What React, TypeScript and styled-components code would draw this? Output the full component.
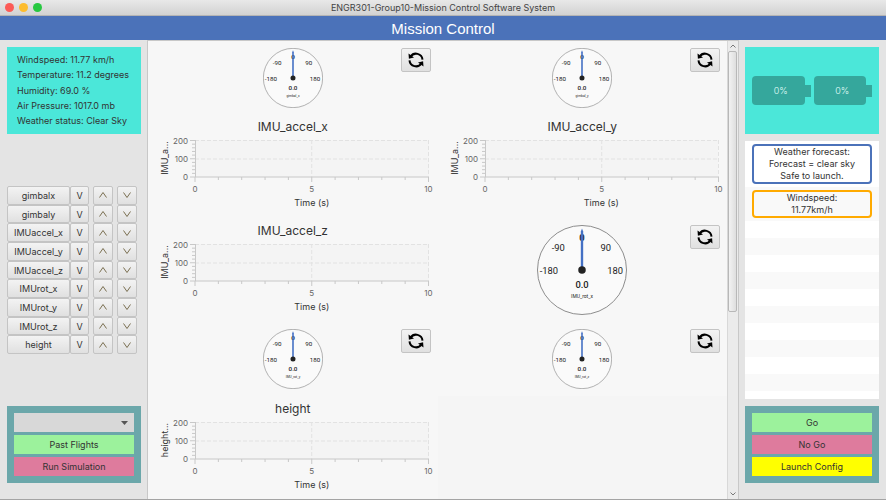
import React from "react";
import styled, { createGlobalStyle } from "styled-components";

const GlobalStyle = createGlobalStyle`
  * { box-sizing: border-box; }
  html, body, #root { height: 100%; }
  body {
    margin: 0;
    background: #e4e4e4;
    color: #333333;
    font-family: Inter, "Liberation Sans", sans-serif;
    font-size: 9px;
  }
  button, select { font: inherit; color: inherit; margin: 0; }
`;

const Window = styled.div`
  display: flex;
  flex-direction: column;
  min-height: 100vh;
  border-bottom: 1px solid #a4a4a4;
`;

const TitleBar = styled.header`
  display: grid;
  grid-template-columns: 1fr auto 1fr;
  align-items: center;
  height: 16px;
  background: linear-gradient(#e8e8e8, #d2d2d2);
  border-bottom: 1px solid #b4b4b4;
`;

const Lights = styled.div`
  display: flex;
  gap: 5px;
  padding-left: 5px;
`;

const Light = styled.button<{ $color: string }>`
  width: 9px;
  height: 9px;
  padding: 0;
  border: 0;
  border-radius: 50%;
  background: ${(p) => p.$color};
`;

const WindowTitle = styled.span`
  line-height: 15px;
  color: #444444;
`;

const Banner = styled.h1`
  margin: 0;
  height: 24px;
  background: #4b72b9;
  color: #ffffff;
  text-align: center;
  font: 400 15px/25px "Liberation Sans", sans-serif;
`;

const Body = styled.div`
  flex: 1;
  display: grid;
  grid-template-columns: 147px minmax(0, 1fr) 147px;
`;

const Side = styled.aside<{ $right?: boolean }>`
  display: flex;
  flex-direction: column;
  padding: ${(p) => (p.$right ? "7px 7px 16px 6px" : "7px 6px 16px 7px")};
`;

const Weather = styled.section`
  display: flex;
  flex-direction: column;
  justify-content: space-between;
  height: 87px;
  padding: 5px 9px 6px 10px;
  background: #4be7d9;
  line-height: 15px;
  white-space: nowrap;
`;

const WeatherLine = styled.p`
  margin: 0;
`;

const Channels = styled.ul`
  display: flex;
  flex-direction: column;
  height: 168px;
  margin: 52px 0 auto;
  padding: 0;
  list-style: none;
`;

const Channel = styled.li`
  flex: 1;
  display: grid;
  grid-template-columns: 63px 19px 24px 24px;
  min-height: 0;
`;

const Key = styled.button<{ $gap?: boolean }>`
  display: flex;
  align-items: center;
  justify-content: center;
  padding: 0;
  margin-left: ${(p) => (p.$gap ? "4px" : "0")};
  border: 1px solid #c4c4c4;
  border-radius: 2px;
  background: linear-gradient(#f3f3f3, #e0e0e0);
`;

const Panel = styled.section`
  display: flex;
  flex-direction: column;
  gap: 3px;
  padding: 7px;
  background: #6ba7aa;
`;

const Action = styled.button<{ $color: string }>`
  height: 19px;
  padding: 0;
  border: 0;
  background: ${(p) => p.$color};
`;

const SelectBox = styled.div`
  display: grid;
  align-items: center;
  background: #d8d8d8;
  > * { grid-area: 1 / 1; }
  > svg { justify-self: end; margin-right: 6px; pointer-events: none; }
`;

const FlightSelect = styled.select`
  appearance: none;
  width: 100%;
  height: 19px;
  padding: 0 6px;
  border: 0;
  background: transparent;
`;

const Center = styled.main`
  display: grid;
  grid-template-columns: minmax(0, 1fr) 11px;
  background: #f7f7f7;
  border: 1px solid #c8c8c8;
  border-bottom: 0;
`;

const Board = styled.div`
  display: grid;
  grid-template-columns: 1fr 1fr;
  grid-template-rows: 73px 104px 104px 74px 1fr;
`;

const GaugeCell = styled.section`
  display: grid;
  grid-template-columns: 1fr auto 1fr;
  align-items: start;
  padding: 7px 7px 0;
  > svg { grid-column: 2; }
`;

const RefreshButton = styled.button`
  display: flex;
  align-items: center;
  justify-content: center;
  justify-self: end;
  width: 30px;
  height: 24px;
  padding: 0;
  border: 1px solid #c4c4c4;
  border-radius: 2px;
  background: linear-gradient(#f3f3f3, #e0e0e0);
`;

const ChartCell = styled.section`
  display: grid;
  grid-template-columns: 47px minmax(0, 1fr) 9px;
  grid-template-rows: 26px 37px 18px 16px;
`;

const ChartTitle = styled.h2`
  grid-column: 1 / -1;
  margin: 0;
  text-align: center;
  font-size: 12px;
  font-weight: 400;
  line-height: 25px;
`;

const PlotArea = styled.svg`
  grid-column: 2;
  grid-row: 2;
  width: 100%;
  height: 37px;
  overflow: visible;
  background: #f4f4f4;
  font-size: 8px;
  fill: #666666;
`;

const AxisName = styled.div`
  grid-column: 2;
  grid-row: 4;
  text-align: center;
  line-height: 16px;
`;

const Blank = styled.div`
  background: #f5f5f5;
`;

const ScrollTrack = styled.div`
  display: flex;
  flex-direction: column;
  background: #ebebeb;
  border-left: 1px solid #d8d8d8;
  padding-right: 1px;
`;

const ScrollArrow = styled.button`
  display: flex;
  align-items: center;
  justify-content: center;
  height: 10px;
  padding: 0;
  border: 0;
  background: transparent;
`;

const ScrollThumb = styled.div`
  flex: 260;
  border: 1px solid #b8b8b8;
  border-radius: 2px;
  background: linear-gradient(90deg, #f2f2f2, #dedede);
`;

const ScrollRest = styled.div`
  flex: 178;
`;

const Batteries = styled.section`
  display: flex;
  align-items: center;
  gap: 3px;
  height: 87px;
  padding: 0 7px;
  background: #4be7d9;
`;

const Battery = styled.div`
  flex: 1;
  display: flex;
  align-items: center;
`;

const Cell = styled.div`
  flex: 1;
  padding-left: 5px;
  border-radius: 4px;
  background: #35a79c;
  color: #e4fffb;
  text-align: center;
  font-weight: 300;
  line-height: 29px;
`;

const Tip = styled.div`
  width: 6px;
  height: 12px;
  background: #35a79c;
`;

const Notices = styled.ul`
  flex: 1;
  display: flex;
  flex-direction: column;
  margin: 7px 0;
  padding: 0;
  list-style: none;
  background: #ffffff;
`;

const Notice = styled.li<{ $odd?: boolean }>`
  padding: 3px 7px;
  background: ${(p) => (p.$odd ? "#f9f9f9" : "#ffffff")};
`;

const NoticeText = styled.p<{ $color: string }>`
  margin: 0;
  border: 2px solid ${(p) => p.$color};
  border-radius: 4px;
  text-align: center;
  line-height: 12px;
`;

const Stripes = styled.li`
  flex: 1;
  background: repeating-linear-gradient(#ffffff 0 17px, #f9f9f9 17px 34px);
`;

const Chevron = ({ down }: { down?: boolean }) => (
  <svg width="8" height="6" viewBox="0 0 8 6" fill="none" stroke="#7a6f50">
    <path d={down ? "M.5 .5 4 5.5 7.5 .5" : "M.5 5.5 4 .5 7.5 5.5"} />
  </svg>
);

const ScrollChevron = ({ down }: { down?: boolean }) => (
  <svg width="6" height="4" viewBox="0 0 6 4" fill="none" stroke="#777777">
    <path d={down ? "M.5 .5 3 3 5.5 .5" : "M.5 3.5 3 1 5.5 3.5"} />
  </svg>
);

const Refresh = ({ label }: { label: string }) => (
  <RefreshButton aria-label={`Reset ${label}`}>
    <svg width="16" height="16" viewBox="0 0 16 16">
      <g fill="none" stroke="#000000" strokeWidth="2">
        <path d="M2.6 4.6A6.5 6.5 0 0 1 14.5 7.6" />
        <path d="M13.4 11.4A6.5 6.5 0 0 1 1.5 8.4" />
      </g>
      <path d="M.5 1.6 .9 6.8 6 5.6ZM15.5 14.4 15.1 9.2 10 10.4Z" />
    </svg>
  </RefreshButton>
);

const Gauge = ({ label, size }: { label: string; size: number }) => (
  <GaugeCell>
    <svg
      width={size}
      height={size}
      viewBox="-45.5 -45.5 91 91"
      fontFamily="Roboto, sans-serif"
      fontSize="9.5"
      textAnchor="middle"
      fill="#222222"
    >
      <circle r="45" fill="#fafafa" stroke="#8c8c8c" strokeWidth="1" />
      <text y="-29" fontWeight="700">0</text>
      <text x="-24" y="-19">-90</text>
      <text x="24" y="-19">90</text>
      <text x="-33.5" y="4">-180</text>
      <text x="33.5" y="4">180</text>
      <text y="18" fontWeight="500">0.0</text>
      <text y="28.5" fontSize="5">{label}</text>
      <path d="M-1.2 0V-39L0-42 1.2-39V0Z" fill="#4470c4" />
      <circle r="3.8" />
    </svg>
    <Refresh label={label} />
  </GaugeCell>
);

const tenths = [0, 1, 2, 3, 4, 5, 6, 7, 8, 9, 10];

const Chart = ({ title, axis }: { title: string; axis: string }) => (
  <ChartCell>
    <ChartTitle>{title}</ChartTitle>
    <PlotArea>
      <g stroke="#e2e2e2" strokeDasharray="4 2">
        <line x1="0" x2="100%" y1="0.5" y2="0.5" />
        <line x1="0" x2="100%" y1="19" y2="19" />
        <line x1="50%" x2="50%" y1="0" y2="37" />
        <line x1="100%" x2="100%" y1="0" y2="37" />
      </g>
      <g stroke="#c8c8c8">
        <line x1="0.5" x2="0.5" y1="0" y2="37" />
        <line x1="0" x2="100%" y1="37" y2="37" />
        {tenths.map((t) => (
          <line key={t} x1={`${t * 10}%`} x2={`${t * 10}%`} y1="37" y2={t % 5 ? 40 : 42} />
        ))}
        {tenths.map((t) => (
          <line key={t} x1={t % 5 ? -3 : -5} x2="0" y1={0.5 + t * 3.65} y2={0.5 + t * 3.65} />
        ))}
      </g>
      <g textAnchor="end">
        <text x="-7" y="4">200</text>
        <text x="-7" y="22">100</text>
        <text x="-7" y="40">0</text>
      </g>
      <g textAnchor="middle">
        <text x="0" y="52">0</text>
        <text x="50%" y="52">5</text>
        <text x="100%" y="52">10</text>
      </g>
      <text transform="translate(-27 18) rotate(-90)" textAnchor="middle" fontSize="9" fill="#333333">
        {axis}
      </text>
    </PlotArea>
    <AxisName>Time (s)</AxisName>
  </ChartCell>
);

const channels = [
  "gimbalx", "gimbaly", "IMUaccel_x", "IMUaccel_y", "IMUaccel_z",
  "IMUrot_x", "IMUrot_y", "IMUrot_z", "height",
];

const weather = [
  "Windspeed: 11.77 km/h",
  "Temperature: 11.2 degrees",
  "Humidity: 69.0 %",
  "Air Pressure: 1017.0 mb",
  "Weather status: Clear Sky",
];

export default function App() {
  return (
    <>
      <GlobalStyle />
      <Window>
        <TitleBar>
          <Lights>
            <Light $color="#fc5b57" aria-label="Close" />
            <Light $color="#fdbc2e" aria-label="Minimize" />
            <Light $color="#27c840" aria-label="Zoom" />
          </Lights>
          <WindowTitle>ENGR301-Group10-Mission Control Software System</WindowTitle>
        </TitleBar>
        <Banner>Mission Control</Banner>
        <Body>
          <Side>
            <Weather>
              {weather.map((line) => (
                <WeatherLine key={line}>{line}</WeatherLine>
              ))}
            </Weather>
            <Channels>
              {channels.map((name) => (
                <Channel key={name}>
                  <Key>{name}</Key>
                  <Key>V</Key>
                  <Key $gap aria-label={`Move ${name} up`}><Chevron /></Key>
                  <Key $gap aria-label={`Move ${name} down`}><Chevron down /></Key>
                </Channel>
              ))}
            </Channels>
            <Panel>
              <SelectBox>
                <FlightSelect aria-label="Flight" />
                <svg width="7" height="4" viewBox="0 0 7 4"><path d="M0 0H7L3.5 4Z" fill="#555555" /></svg>
              </SelectBox>
              <Action $color="#9cf29c">Past Flights</Action>
              <Action $color="#de7b9d">Run Simulation</Action>
            </Panel>
          </Side>
          <Center>
            <Board>
              <Gauge label="gimbal_x" size={60} />
              <Gauge label="gimbal_y" size={60} />
              <Chart title="IMU_accel_x" axis="IMU_a..." />
              <Chart title="IMU_accel_y" axis="IMU_a..." />
              <Chart title="IMU_accel_z" axis="IMU_a..." />
              <Gauge label="IMU_rot_x" size={90} />
              <Gauge label="IMU_rot_y" size={60} />
              <Gauge label="IMU_rot_z" size={60} />
              <Chart title="height" axis="height..." />
              <Blank />
            </Board>
            <ScrollTrack>
              <ScrollArrow aria-label="Scroll up"><ScrollChevron /></ScrollArrow>
              <ScrollThumb />
              <ScrollRest />
              <ScrollArrow aria-label="Scroll down"><ScrollChevron down /></ScrollArrow>
            </ScrollTrack>
          </Center>
          <Side $right>
            <Batteries>
              <Battery><Cell>0%</Cell><Tip /></Battery>
              <Battery><Cell>0%</Cell><Tip /></Battery>
            </Batteries>
            <Notices>
              <Notice>
                <NoticeText $color="#4b72b9">
                  Weather forecast:<br />Forecast = clear sky<br />Safe to launch.
                </NoticeText>
              </Notice>
              <Notice $odd>
                <NoticeText $color="#ffaa00">Windspeed:<br />11.77km/h</NoticeText>
              </Notice>
              <Stripes />
            </Notices>
            <Panel>
              <Action $color="#9cf29c">Go</Action>
              <Action $color="#de7b9d">No Go</Action>
              <Action $color="#ffff00">Launch Config</Action>
            </Panel>
          </Side>
        </Body>
      </Window>
    </>
  );
}
